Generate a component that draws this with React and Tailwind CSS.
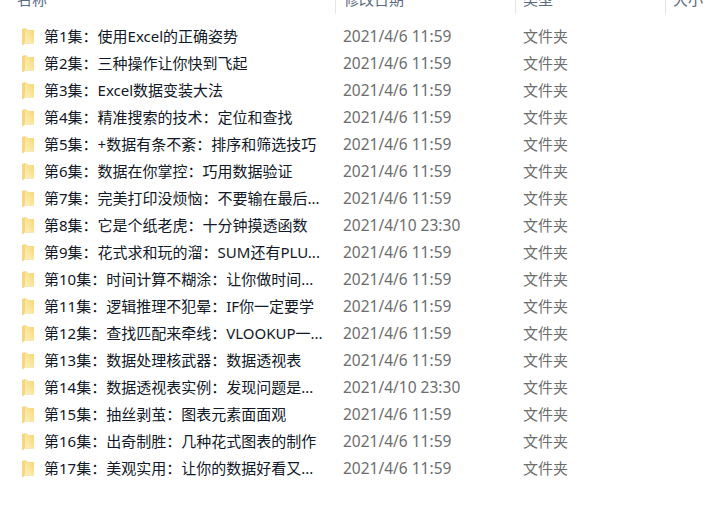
import React from 'react';

const font = { fontFamily: '"Noto Sans", "Noto Sans CJK SC", sans-serif' };

const rows = [
  ['第1集：使用Excel的正确姿势', '2021/4/6 11:59'],
  ['第2集：三种操作让你快到飞起', '2021/4/6 11:59'],
  ['第3集：Excel数据变装大法', '2021/4/6 11:59'],
  ['第4集：精准搜索的技术：定位和查找', '2021/4/6 11:59'],
  ['第5集：+数据有条不紊：排序和筛选技巧', '2021/4/6 11:59'],
  ['第6集：数据在你掌控：巧用数据验证', '2021/4/6 11:59'],
  ['第7集：完美打印没烦恼：不要输在最后...', '2021/4/6 11:59'],
  ['第8集：它是个纸老虎：十分钟摸透函数', '2021/4/10 23:30'],
  ['第9集：花式求和玩的溜：SUM还有PLU...', '2021/4/6 11:59'],
  ['第10集：时间计算不糊涂：让你做时间...', '2021/4/6 11:59'],
  ['第11集：逻辑推理不犯晕：IF你一定要学', '2021/4/6 11:59'],
  ['第12集：查找匹配来牵线：VLOOKUP一...', '2021/4/6 11:59'],
  ['第13集：数据处理核武器：数据透视表', '2021/4/6 11:59'],
  ['第14集：数据透视表实例：发现问题是...', '2021/4/10 23:30'],
  ['第15集：抽丝剥茧：图表元素面面观', '2021/4/6 11:59'],
  ['第16集：出奇制胜：几种花式图表的制作', '2021/4/6 11:59'],
  ['第17集：美观实用：让你的数据好看又...', '2021/4/6 11:59'],
];

// narrow folder, seen nearly edge-on
const FolderIcon = () => (
  <svg width="12" height="18" viewBox="0 0 12 18" className="shrink-0">
    <defs>
      <linearGradient id="folderFace" x1="0" y1="1" x2="1" y2="0">
        <stop offset="0" stopColor="#fef0bd" />
        <stop offset="1" stopColor="#f8d672" />
      </linearGradient>
    </defs>
    <path d="M0 1 L3 0 L3 15 L1 17.5 L0 16.5 Z" fill="#f6d77f" />
    <path d="M3 0.5 L5 0.5 L6 2 L12 2 L12 15 L3 15 Z" fill="url(#folderFace)" />
    <path d="M3 15 L12 15 L12 15.5 L2.5 15.5 Z" fill="#f3d27a" />
  </svg>
);

const HeaderCell = ({ label, className }) => (
  <div className={`h-full overflow-hidden text-[#5a6b80] text-[15px] leading-[20px] ${className}`}>
    <div className="-mt-[11px] whitespace-nowrap">{label}</div>
  </div>
);

const App = () => {
  return (
    <div className="w-[709px] h-[505px] bg-white overflow-hidden" style={font}>
      <div className="flex h-[14px]">
        <HeaderCell label="名称" className="w-[335px] pl-[17px]" />
        <HeaderCell label="修改日期" className="w-[180px] pl-[8px] border-l border-[#e5e5e5]" />
        <HeaderCell label="类型" className="w-[150px] pl-[7px] border-l border-[#e5e5e5]" />
        <HeaderCell label="大小" className="flex-1 pl-[7px] border-l border-[#e5e5e5]" />
      </div>
      <div className="flex flex-col pt-[9px]">
        {rows.map(([name, date]) => (
          <div key={name} className="flex items-center h-[27px] text-[15px]">
            <div className="flex items-center w-[343px] pl-[22px]">
              <FolderIcon />
              <span className="ml-[10px] text-[#111827] whitespace-nowrap">{name}</span>
            </div>
            <div className="w-[180px] text-[15.5px] text-[#6d6d6d] whitespace-nowrap">{date}</div>
            <div className="text-[#6d6d6d] whitespace-nowrap">文件夹</div>
          </div>
        ))}
      </div>
    </div>
  );
};

export default App;
